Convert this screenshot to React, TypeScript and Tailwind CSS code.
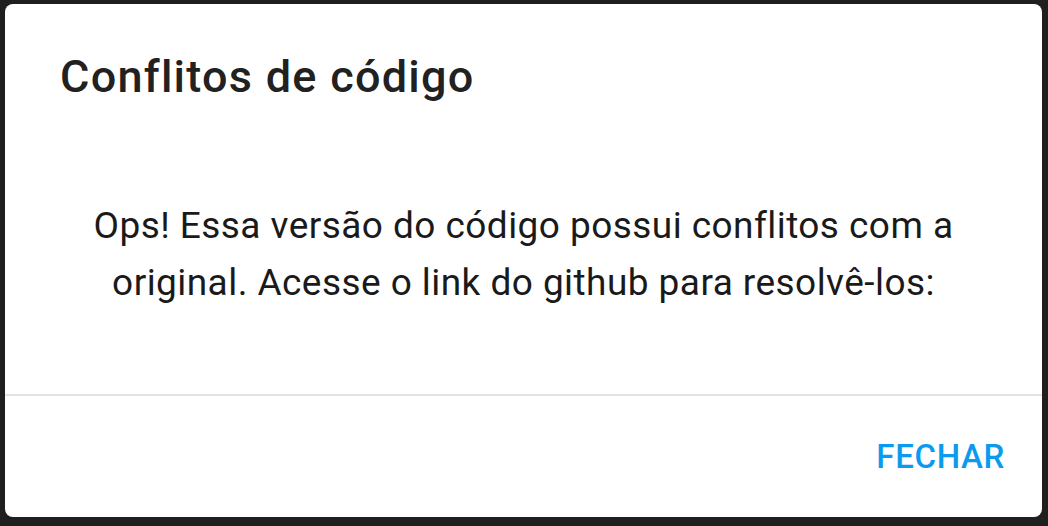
import React from 'react';

export default function App() {
  return (
    <div className="h-[526px] w-full bg-[#1f1f1f] pt-[4px] pl-[5px] pr-[6px] pb-[9px] font-['Roboto',sans-serif]">
      <div className="flex h-full flex-col rounded-[8px] bg-white">
        <h2 className="pl-[55px] pt-[46px] text-[45px] font-medium leading-[54px] tracking-[0.028em] text-[#212121]">
          Conflitos de código
        </h2>
        <div className="mx-auto mt-[93px] w-[900px] text-center text-[37px] leading-[57px] tracking-[0.012em] text-[#1a1a1a]">
          Ops! Essa versão do código possui conflitos com a original. Acesse o link do github para resolvê-los:
        </div>
        <div className="mt-auto h-[2px] bg-[#e3e3e3]" />
        <div className="flex h-[121px] items-center justify-end pr-[37px]">
          <button className="text-[33px] font-medium uppercase tracking-[0.02em] text-[#0b9bee]">
            Fechar
          </button>
        </div>
      </div>
    </div>
  );
}
